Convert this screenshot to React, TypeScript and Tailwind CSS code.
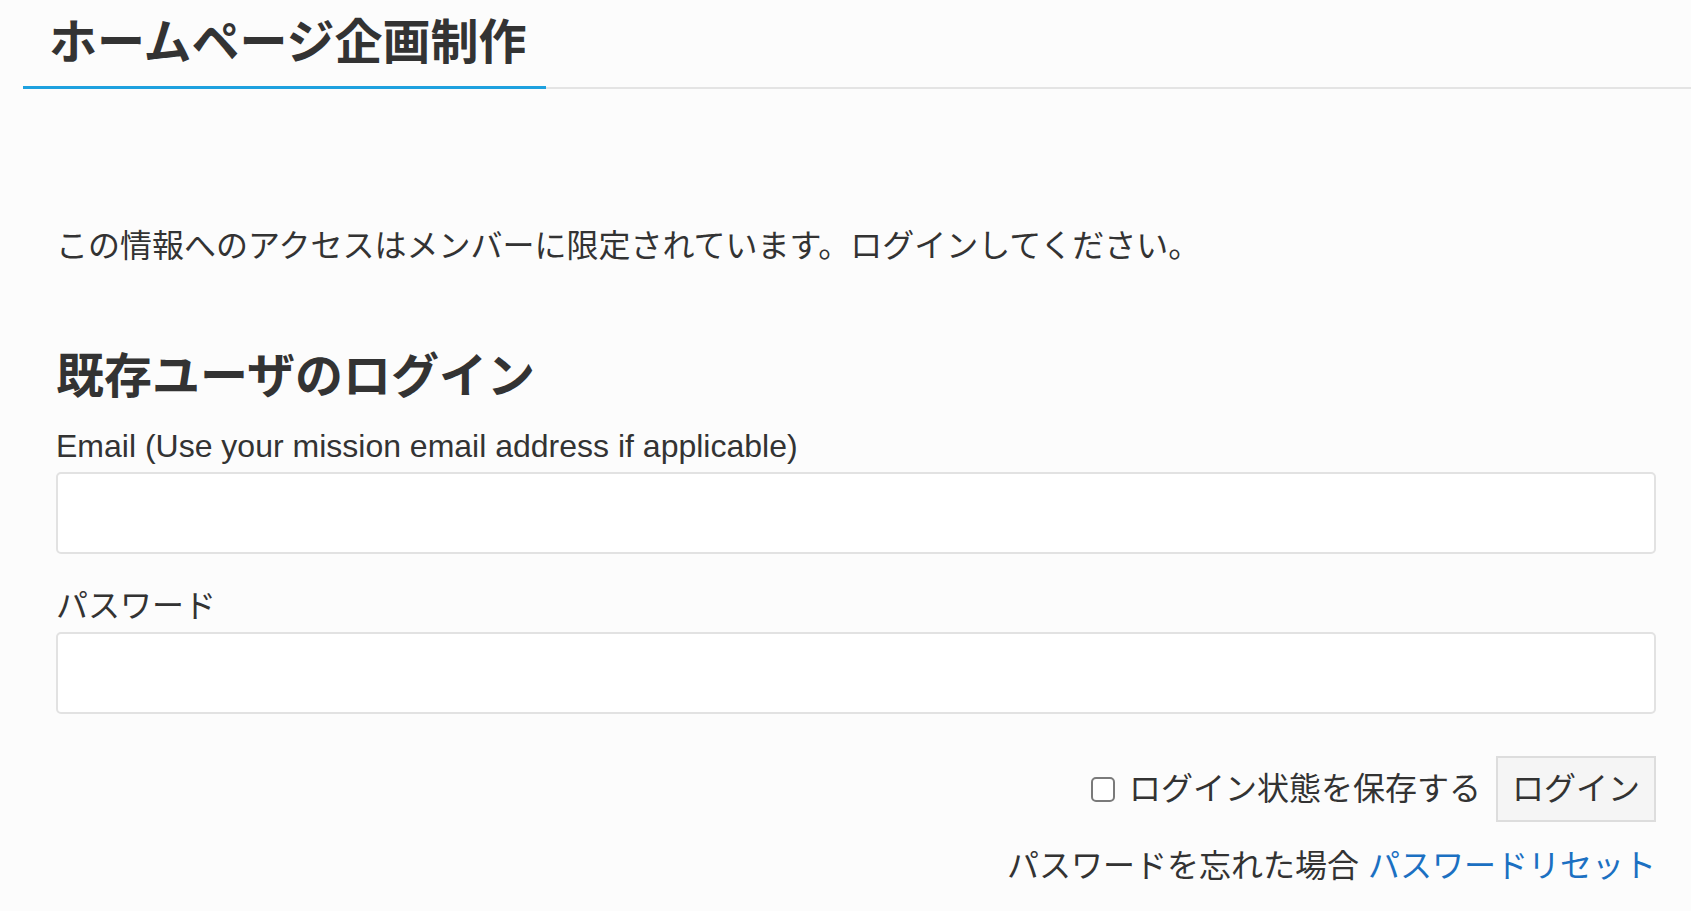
export default function App() {
  return (
    <div className="min-h-screen bg-[#fcfcfc] text-[#333333] font-['Liberation_Sans','Noto_Sans_CJK_JP',sans-serif]">
      <div className="ml-[23px] flex border-b-2 border-[#e4e4e4]">
        <h1 className="-mb-[2px] border-b-[3px] border-[#1ea1df] pl-[26px] pr-[19px] pt-[19px] pb-[19px] text-[48px] font-bold leading-[48px]">
          ホームページ企画制作
        </h1>
      </div>
      <div className="ml-[56px] w-[1600px]">
        <p className="mt-[133px] text-[32px] leading-[48px]">
          この情報へのアクセスはメンバーに限定されています。ログインしてください。
        </p>
        <h2 className="mt-[79px] text-[48px] font-bold leading-[56px]">既存ユーザのログイン</h2>
        <form onSubmit={(e) => e.preventDefault()}>
          <label className="mt-[21px] mb-[6px] block text-[32px] leading-[40px]">
            Email (Use your mission email address if applicable)
          </label>
          <input
            type="email"
            className="block h-[82px] w-full rounded-[5px] border-2 border-[#e2e2e2] bg-white outline-none"
          />
          <label className="mt-[32px] mb-[6px] block text-[32px] leading-[40px]">パスワード</label>
          <input
            type="password"
            className="block h-[82px] w-full rounded-[5px] border-2 border-[#e2e2e2] bg-white outline-none"
          />
          <div className="mt-[42px] flex items-center justify-end">
            <input
              type="checkbox"
              className="mr-[14px] h-[25px] w-[24px] appearance-none rounded-[5px] border-2 border-[#7a7a7a] bg-white"
            />
            <span className="text-[32px] leading-[40px]">ログイン状態を保存する</span>
            <button
              type="submit"
              className="ml-[15px] border-2 border-[#dddddd] bg-[#f5f5f5] px-[14px] py-[11px] text-[32px] leading-[40px] text-[#333333]"
            >
              ログイン
            </button>
          </div>
          <div className="mt-[24px] text-right text-[32px] leading-[40px]">
            パスワードを忘れた場合 <a href="#" className="text-[#1b70c2]">パスワードリセット</a>
          </div>
        </form>
      </div>
    </div>
  );
}
